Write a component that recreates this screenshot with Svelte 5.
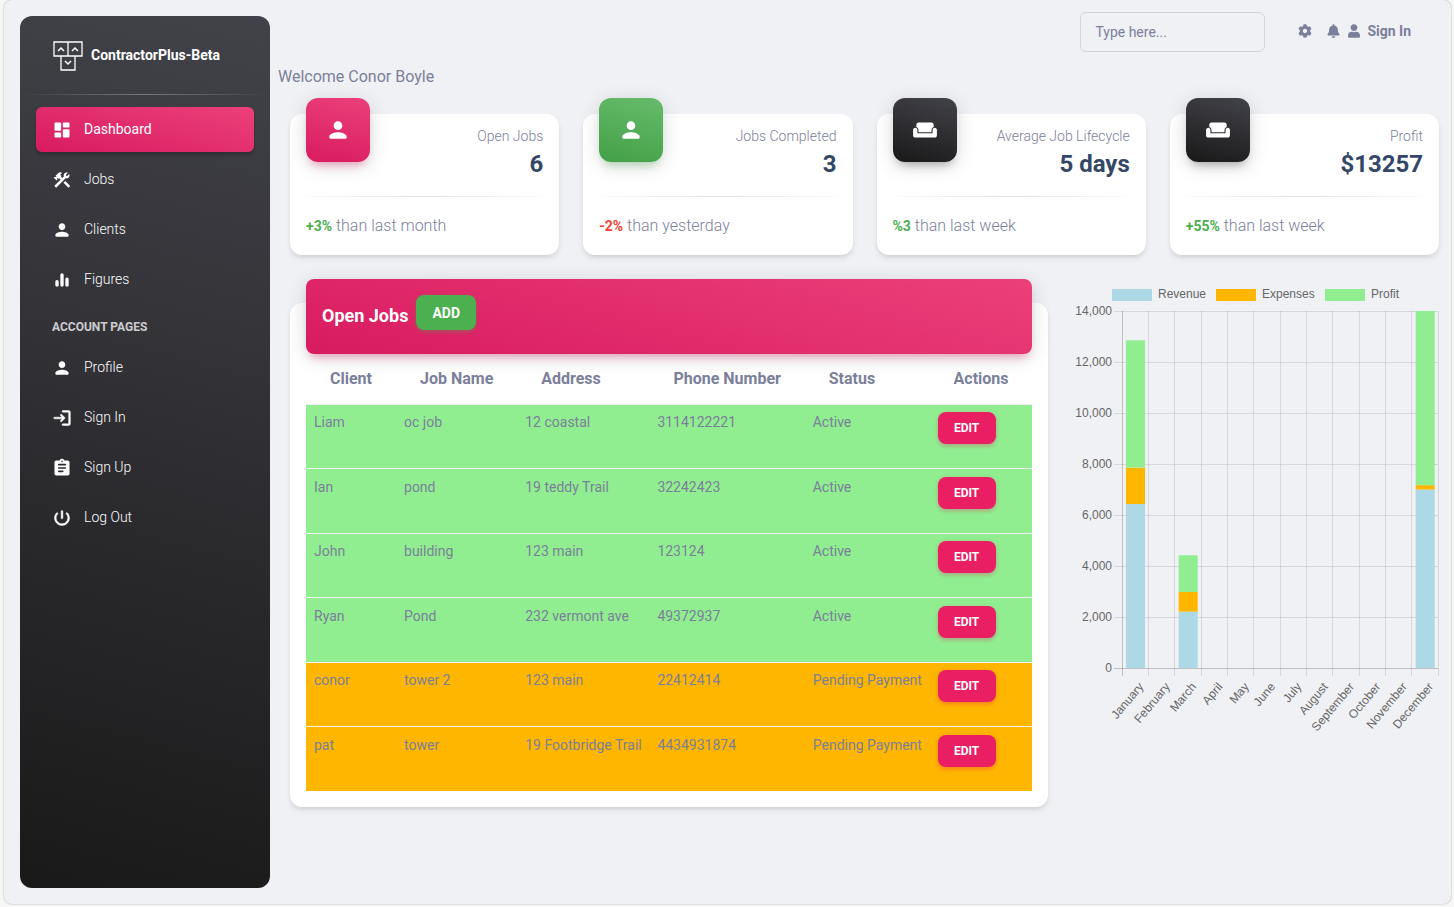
<script>
  const icons = {
    dashboard: 'M4 13h6c.55 0 1-.45 1-1V4c0-.55-.45-1-1-1H4c-.55 0-1 .45-1 1v8c0 .55.45 1 1 1zm0 8h6c.55 0 1-.45 1-1v-4c0-.55-.45-1-1-1H4c-.55 0-1 .45-1 1v4c0 .55.45 1 1 1zm10 0h6c.55 0 1-.45 1-1v-8c0-.55-.45-1-1-1h-6c-.55 0-1 .45-1 1v8c0 .55.45 1 1 1zM13 4v4c0 .55.45 1 1 1h6c.55 0 1-.45 1-1V4c0-.55-.45-1-1-1h-6c-.55 0-1 .45-1 1z',
    tools: 'M13.78 15.17l2.12-2.12 6 6-2.12 2.12zM17.5 10c1.93 0 3.5-1.57 3.5-3.5 0-.58-.16-1.12-.41-1.6l-2.7 2.7-1.49-1.49 2.7-2.7C18.62 3.16 18.08 3 17.5 3 15.57 3 14 4.57 14 6.5c0 .41.08.8.21 1.16l-1.85 1.85-1.78-1.78.71-.71-1.41-1.41L12 3.49c-1.17-1.17-3.07-1.17-4.24 0L4.22 7.03l1.41 1.41H2.81l-.71.71 3.54 3.54.71-.71V9.15l1.41 1.41.71-.71 1.78 1.78-7.41 7.41 2.12 2.12L16.34 9.79c.36.13.75.21 1.16.21z',
    person: 'M12 12c2.21 0 4-1.79 4-4s-1.79-4-4-4-4 1.79-4 4 1.79 4 4 4zm0 2c-2.67 0-8 1.34-8 4v1c0 .55.45 1 1 1h14c.55 0 1-.45 1-1v-1c0-2.66-5.33-4-8-4z',
    figures: 'M12 20c1.1 0 2-.9 2-2V6c0-1.1-.9-2-2-2s-2 .9-2 2v12c0 1.1.9 2 2 2zm-6 0c1.1 0 2-.9 2-2v-4c0-1.1-.9-2-2-2s-2 .9-2 2v4c0 1.1.9 2 2 2zm10-9v7c0 1.1.9 2 2 2s2-.9 2-2v-7c0-1.1-.9-2-2-2s-2 .9-2 2z',
    login: 'M10.3 7.7c-.4.4-.4 1 0 1.4l1.9 1.9H3c-.6 0-1 .4-1 1s.4 1 1 1h9.200l-1.900 1.900c-.4.4-.4 1 0 1.400.4.4 1 .4 1.400 0l3.600-3.600c.4-.4.4-1 0-1.400l-3.600-3.600c-.4-.4-1-.4-1.400 0zM20 19h-7c-.6 0-1 .4-1 1s.4 1 1 1h7c1.100 0 2-.9 2-2V5c0-1.100-.9-2-2-2h-7c-.6 0-1 .4-1 1s.4 1 1 1h7v14z',
    assignment: 'M19 3h-4.180C14.400 1.840 13.300 1 12 1s-2.400.84-2.820 2H5c-1.100 0-2 .9-2 2v14c0 1.100.9 2 2 2h14c1.100 0 2-.9 2-2V5c0-1.100-.9-2-2-2zm-7 0c.55 0 1 .45 1 1s-.45 1-1 1-1-.45-1-1 .45-1 1-1zm1 14H8c-.55 0-1-.45-1-1s.45-1 1-1h5c.55 0 1 .45 1 1s-.45 1-1 1zm3-4H8c-.55 0-1-.45-1-1s.45-1 1-1h8c.55 0 1 .45 1 1s-.45 1-1 1zm0-4H8c-.55 0-1-.45-1-1s.45-1 1-1h8c.55 0 1 .45 1 1s-.45 1-1 1z',
    power: 'M12 3c-.55 0-1 .45-1 1v8c0 .55.45 1 1 1s1-.45 1-1V4c0-.55-.45-1-1-1zm5.140 2.860c-.39.39-.38 1-.01 1.390 1.130 1.200 1.830 2.800 1.870 4.570.09 3.830-3.060 7.130-6.890 7.170C8.180 19.050 5 15.900 5 12c0-1.840.71-3.510 1.870-4.760.37-.39.37-1-.01-1.380-.4-.4-1.050-.39-1.430.02C3.980 7.420 3.070 9.470 3 11.740c-.14 4.880 3.830 9.100 8.710 9.250 5.100.16 9.290-3.930 9.290-9 0-2.370-.92-4.510-2.420-6.110-.38-.41-1.040-.42-1.440-.02z',
    sofa: 'M21 10c-1.100 0-2 .9-2 2v3H5v-3c0-1.100-.9-2-2-2s-2 .9-2 2v5c0 1.100.9 2 2 2h18c1.100 0 2-.9 2-2v-5c0-1.100-.9-2-2-2zm-3-5H6c-1.100 0-2 .9-2 2v2.150c1.160.41 2 1.510 2 2.820V14h12v-2.030c0-1.300.84-2.400 2-2.820V7c0-1.100-.9-2-2-2z'
  };
  const heavy = ['login', 'power'];

  const mainLinks = [
    { label: 'Dashboard', icon: 'dashboard', active: true },
    { label: 'Jobs', icon: 'tools' },
    { label: 'Clients', icon: 'person' },
    { label: 'Figures', icon: 'figures' }
  ];
  const accountLinks = [
    { label: 'Profile', icon: 'person' },
    { label: 'Sign In', icon: 'login' },
    { label: 'Sign Up', icon: 'assignment' },
    { label: 'Log Out', icon: 'power' }
  ];

  const stats = [
    { title: 'Open Jobs', value: '6', delta: '+3%', note: 'than last month', tone: 'pink', icon: 'person' },
    { title: 'Jobs Completed', value: '3', delta: '-2%', note: 'than yesterday', tone: 'green', icon: 'person', down: true },
    { title: 'Average Job Lifecycle', value: '5 days', delta: '%3', note: 'than last week', tone: 'dark', icon: 'sofa' },
    { title: 'Profit', value: '$13257', delta: '+55%', note: 'than last week', tone: 'dark', icon: 'sofa' }
  ];

  const columns = ['Client', 'Job Name', 'Address', 'Phone Number', 'Status', 'Actions'];
  const jobs = [
    ['Liam', 'oc job', '12 coastal', '3114122221', 'Active'],
    ['Ian', 'pond', '19 teddy Trail', '32242423', 'Active'],
    ['John', 'building', '123 main', '123124', 'Active'],
    ['Ryan', 'Pond', '232 vermont ave', '49372937', 'Active'],
    ['conor', 'tower 2', '123 main', '22412414', 'Pending Payment'],
    ['pat', 'tower', '19 Footbridge Trail', '4434931874', 'Pending Payment']
  ];

  const months = ['January', 'February', 'March', 'April', 'May', 'June', 'July', 'August', 'September', 'October', 'November', 'December'];
  const series = [
    { name: 'Revenue', color: '#add8e6', x: 40, data: { 0: 6430, 2: 2210, 11: 7000 } },
    { name: 'Expenses', color: '#ffb600', x: 144, data: { 0: 1430, 2: 770, 11: 170 } },
    { name: 'Profit', color: '#90ee90', x: 253, data: { 0: 4990, 2: 1440, 11: 6830 } }
  ];
  const plot = { left: 50, right: 366, top: 32, bottom: 389, max: 14000 };
  const step = (plot.right - plot.left) / months.length;
  const yOf = (v) => plot.bottom - (v / plot.max) * (plot.bottom - plot.top);
  const xOf = (i) => plot.left + i * step;
  const ticks = [0, 2000, 4000, 6000, 8000, 10000, 12000, 14000];

  const bars = months.flatMap((_, i) => {
    let base = 0;
    return series.flatMap((s) => {
      const v = s.data[i];
      if (!v) return [];
      const bar = { x: xOf(i) + 4, y: yOf(base + v), h: yOf(base) - yOf(base + v), color: s.color };
      base += v;
      return [bar];
    });
  });
</script>

{#snippet icon(name, size)}
  <svg width={size} height={size} viewBox="0 0 24 24" fill="currentColor" stroke="currentColor" stroke-width={heavy.includes(name) ? 0.6 : 0} aria-hidden="true"><path d={icons[name]} /></svg>
{/snippet}

{#snippet navLink(link)}
  <li>
    <a href="#top" class="nav-link" class:active={link.active}>
      {@render icon(link.icon, 20)}
      <span>{link.label}</span>
    </a>
  </li>
{/snippet}

<div class="page" id="top">
  <aside class="sidebar">
    <a href="#top" class="brand">
      <svg width="30" height="32" viewBox="0 -2 30 32" fill="none" stroke="#fff" stroke-width="1.300" aria-hidden="true">
        <path d="M1 1h28v14H1zM15 1v14M8 15v14h14V15" />
        <path d="M5 10l3-3 3 3M19 10l3-3 3 3M12 20l3 3 3-3" stroke-width="1.500" />
      </svg>
      <span>ContractorPlus-Beta</span>
    </a>
    <hr class="rule light" />
    <nav>
      <ul>
        {#each mainLinks as link}{@render navLink(link)}{/each}
        <li><h6>Account pages</h6></li>
        {#each accountLinks as link}{@render navLink(link)}{/each}
      </ul>
    </nav>
  </aside>

  <main>
    <header class="topbar">
      <input type="text" placeholder="Type here..." aria-label="Search" />
      <div class="actions">
        <button class="plain" aria-label="Settings">
          <svg width="14" height="14" viewBox="0 0 512 512" fill="currentColor"><path d="M487.400 315.700l-42.600-24.600c4.300-23.200 4.300-47 0-70.200l42.600-24.600c4.900-2.800 7.100-8.600 5.500-14-11.100-35.600-30-67.800-54.700-94.600-3.800-4.100-10-5.100-14.800-2.300L380.800 110c-17.900-15.400-38.500-27.300-60.800-35.100V25.800c0-5.600-3.900-10.500-9.400-11.700-36.700-8.200-74.300-7.800-109.200 0-5.500 1.200-9.400 6.100-9.400 11.700V75c-22.200 7.900-42.800 19.800-60.800 35.100L88.700 85.500c-4.900-2.800-11-1.900-14.800 2.300-24.700 26.700-43.600 58.900-54.700 94.600-1.700 5.400.6 11.200 5.500 14L67.300 221c-4.300 23.200-4.300 47 0 70.200l-42.600 24.600c-4.900 2.800-7.100 8.600-5.500 14 11.100 35.600 30 67.800 54.700 94.600 3.800 4.100 10 5.100 14.800 2.300l42.600-24.600c17.900 15.400 38.500 27.300 60.800 35.100v49.200c0 5.600 3.900 10.500 9.400 11.700 36.700 8.200 74.300 7.800 109.200 0 5.500-1.200 9.400-6.100 9.400-11.700v-49.200c22.200-7.900 42.800-19.800 60.800-35.100l42.600 24.600c4.900 2.800 11 1.900 14.800-2.300 24.700-26.700 43.600-58.900 54.700-94.600 1.500-5.500-.7-11.300-5.600-14.100zM256 336c-44.100 0-80-35.900-80-80s35.900-80 80-80 80 35.900 80 80-35.900 80-80 80z" /></svg>
        </button>
        <button class="plain bell" aria-label="Notifications">
          <svg width="13" height="14" viewBox="0 0 448 512" fill="currentColor"><path d="M224 512c35.320 0 63.970-28.650 63.970-64H160.030c0 35.350 28.650 64 63.970 64zm215.390-149.710c-19.320-20.760-55.470-51.990-55.470-154.290 0-77.700-54.480-139.900-127.940-155.160V32c0-17.670-14.320-32-31.980-32s-31.980 14.330-31.980 32v20.840C118.560 68.100 64.080 130.300 64.080 208c0 102.300-36.150 133.530-55.470 154.290-6 6.450-8.660 14.160-8.610 21.710.11 16.400 12.980 32 32.100 32h383.800c19.120 0 32-15.600 32.100-32 .05-7.550-2.610-15.270-8.610-21.710z" /></svg>
        </button>
        <a href="#top" class="signin">
          <svg width="12" height="14" viewBox="0 0 448 512" fill="currentColor" aria-hidden="true"><path d="M224 256c70.700 0 128-57.300 128-128S294.700 0 224 0 96 57.300 96 128s57.300 128 128 128zm89.600 32h-16.700c-22.200 10.200-46.900 16-72.900 16s-50.600-5.800-72.900-16h-16.700C60.200 288 0 348.200 0 422.400V464c0 26.500 21.500 48 48 48h352c26.500 0 48-21.500 48-48v-41.600c0-74.200-60.200-134.400-134.400-134.400z" /></svg>
          <span>Sign In</span>
        </a>
      </div>
    </header>

    <p class="welcome">Welcome Conor Boyle</p>

    <section class="stats">
      {#each stats as s}
        <article class="card">
          <div class="stat-head">
            <div class="tile {s.tone}">{@render icon(s.icon, 26)}</div>
            <div class="figures">
              <p>{s.title}</p>
              <h4>{s.value}</h4>
            </div>
          </div>
          <hr class="rule" />
          <p class="note"><strong class:down={s.down}>{s.delta}</strong> {s.note}</p>
        </article>
      {/each}
    </section>

    <section class="lower">
      <div class="jobs-column">
        <article class="card jobs">
          <div class="jobs-head">
            <h6>Open Jobs</h6>
            <button class="btn add">Add</button>
          </div>
          <table>
            <colgroup>
              <col class="c1" /><col class="c2" /><col class="c3" /><col class="c4" /><col class="c5" /><col class="c6" />
            </colgroup>
            <thead>
              <tr>{#each columns as c}<th scope="col">{c}</th>{/each}</tr>
            </thead>
            <tbody>
              {#each jobs as job}
                <tr class:pending={job[4] !== 'Active'}>
                  {#each job as cell}<td>{cell}</td>{/each}
                  <td><button class="btn edit">Edit</button></td>
                </tr>
              {/each}
            </tbody>
          </table>
        </article>
      </div>

      <div class="chart">
        <svg viewBox="0 0 367 462" role="img" aria-label="Revenue, expenses and profit by month">
          {#each series as s}
            <rect x={s.x} y="10" width="40" height="12" fill={s.color} />
            <text x={s.x + 46} y="19">{s.name}</text>
          {/each}
          <g class="grid">
            {#each ticks as t}
              <line x1={plot.left - 8} x2={plot.right} y1={yOf(t)} y2={yOf(t)} class:axis={t === 0} />
            {/each}
            {#each [...months, ''] as _, i}
              <line x1={xOf(i)} x2={xOf(i)} y1={plot.top} y2={plot.bottom + 8} class:axis={i === 0} />
            {/each}
          </g>
          {#each bars as b}
            <rect x={b.x} y={b.y} width="19" height={b.h} fill={b.color} />
          {/each}
          {#each ticks as t}
            <text x="40" y={yOf(t) + 4} text-anchor="end">{t.toLocaleString('en-US')}</text>
          {/each}
          {#each months as m, i}
            <text transform="translate({xOf(i) + step / 2 + 9} {plot.bottom + 19}) rotate(-50)" text-anchor="end">{m}</text>
          {/each}
        </svg>
      </div>
    </section>
  </main>
</div>

<style>
  :global(body) {
    margin: 0;
    background: #f7f7f7;
  }
  .page, .page :global(*) {
    box-sizing: border-box;
  }
  .page {
    display: flex;
    min-height: calc(100vh - 3px);
    margin: 0 3px 3px 4px;
    background: #f0f1f5;
    border-radius: 8px;
    box-shadow: 0 0 2px rgba(0, 0, 0, 0.35);
    font-family: Roboto, "Liberation Sans", sans-serif;
    font-size: 16px;
    line-height: 24px;
    color: #7b809a;
  }
  h4, h6, p, ul {
    margin: 0;
    padding: 0;
  }
  ul {
    list-style: none;
  }
  a {
    color: inherit;
    text-decoration: none;
  }
  button, input {
    font-family: inherit;
  }

  .sidebar {
    flex: 0 0 250px;
    margin: 16px 0 16px 16px;
    border-radius: 12px;
    background: linear-gradient(195deg, #42424a, #191919);
    color: #fff;
  }
  .brand {
    display: flex;
    align-items: center;
    gap: 8px;
    height: 78px;
    padding-left: 33px;
    font-size: 14px;
    font-weight: 700;
  }
  .rule {
    height: 1px;
    margin: 0;
    border: 0;
    background: linear-gradient(90deg, transparent, rgba(0, 0, 0, 0.12), transparent);
  }
  .rule.light {
    background: linear-gradient(90deg, transparent, rgba(255, 255, 255, 0.3), transparent);
  }
  .sidebar ul {
    display: flex;
    flex-direction: column;
    gap: 5px;
    padding: 12px 16px;
  }
  .nav-link {
    display: flex;
    align-items: center;
    gap: 12px;
    height: 45px;
    padding: 0 16px;
    border-radius: 6px;
    font-size: 14px;
    font-weight: 300;
  }
  .nav-link span {
    padding-bottom: 2px;
  }
  .nav-link.active {
    font-weight: 400;
    background: linear-gradient(195deg, #ec407a, #d81b60);
    box-shadow: 0 3px 3px rgba(0, 0, 0, 0.2);
  }
  .sidebar h6 {
    padding: 9px 16px 2px;
    font-size: 12px;
    line-height: 22px;
    text-transform: uppercase;
    opacity: 0.75;
  }

  main {
    flex: 1;
    min-width: 0;
    padding: 12px 0 24px 8px;
  }
  .topbar {
    display: flex;
    justify-content: flex-end;
    gap: 33px;
    padding-right: 40px;
  }
  .topbar input {
    width: 185px;
    height: 40px;
    padding: 0 14px;
    border: 1px solid #d2d6da;
    border-radius: 6px;
    background: transparent;
    font-size: 14px;
    color: #495057;
  }
  .topbar input::placeholder {
    color: #7b809a;
    opacity: 1;
  }
  .actions {
    display: flex;
    align-items: center;
    gap: 8px;
    height: 38px;
  }
  .signin {
    display: flex;
    align-items: center;
    gap: 7px;
    font-size: 14px;
    font-weight: 700;
  }
  .plain {
    display: flex;
    padding: 0;
    border: 0;
    background: none;
    color: inherit;
  }
  .bell {
    margin-left: 7px;
  }
  .welcome {
    margin-top: 13px;
  }

  .card {
    border-radius: 12px;
    background: #fff;
    box-shadow: 0 4px 6px -1px rgba(0, 0, 0, 0.1), 0 2px 4px -1px rgba(0, 0, 0, 0.06);
  }
  .stats {
    display: grid;
    grid-template-columns: repeat(4, 1fr);
    gap: 24px;
    padding: 25px 12px 0;
  }
  .stat-head {
    display: flex;
    justify-content: space-between;
    height: 82px;
    padding: 0 16px;
  }
  .tile {
    display: grid;
    place-items: center;
    width: 64px;
    height: 64px;
    margin-top: -16px;
    border-radius: 12px;
    color: #fff;
  }
  .pink {
    background: linear-gradient(195deg, #ec407a, #d81b60);
    box-shadow: 0 4px 20px rgba(0, 0, 0, 0.14), 0 7px 10px -5px rgba(233, 30, 99, 0.4);
  }
  .green {
    background: linear-gradient(195deg, #66bb6a, #43a047);
    box-shadow: 0 4px 20px rgba(0, 0, 0, 0.14), 0 7px 10px -5px rgba(76, 175, 80, 0.4);
  }
  .dark {
    background: linear-gradient(195deg, #42424a, #191919);
    box-shadow: 0 4px 20px rgba(0, 0, 0, 0.14), 0 7px 10px -5px rgba(64, 64, 64, 0.4);
  }
  .figures {
    padding-top: 10px;
    text-align: right;
  }
  .figures p {
    font-size: 14px;
    font-weight: 300;
  }
  .figures h4 {
    font-size: 24px;
    line-height: 32px;
    font-weight: 700;
    color: #344767;
  }
  .note {
    padding: 17px 16px;
    font-weight: 300;
  }
  .note strong {
    font-size: 14px;
    font-weight: 700;
    color: #4caf50;
  }
  .note .down {
    color: #f44335;
  }

  .lower {
    display: grid;
    grid-template-columns: 2fr 1fr;
    align-items: start;
    padding-top: 24px;
  }
  .jobs-column, .chart {
    padding: 0 12px;
  }
  .jobs {
    display: flow-root;
    margin-top: 24px;
    padding: 0 16px 16px;
  }
  .jobs-head {
    display: flex;
    align-items: flex-start;
    gap: 8px;
    height: 75px;
    margin-top: -24px;
    padding: 16px;
    border-radius: 8px;
    background: linear-gradient(195deg, #ec407a, #d81b60);
    box-shadow: 0 4px 20px rgba(0, 0, 0, 0.14), 0 7px 10px -5px rgba(233, 30, 99, 0.4);
  }
  .jobs-head h6 {
    font-size: 18px;
    line-height: 42px;
    font-weight: 700;
    color: #fff;
  }
  .btn {
    border: 0;
    border-radius: 8px;
    padding: 0 16px;
    font-weight: 700;
    text-transform: uppercase;
    color: #fff;
  }
  .add {
    height: 35px;
    font-size: 14px;
    background: #4caf50;
    box-shadow: 0 3px 3px rgba(76, 175, 80, 0.15), 0 1px 5px rgba(76, 175, 80, 0.2);
  }
  .edit {
    display: block;
    min-width: 58px;
    height: 32px;
    font-size: 12px;
    background: #e91e63;
    box-shadow: 0 3px 3px rgba(233, 30, 99, 0.15), 0 1px 5px rgba(233, 30, 99, 0.2);
  }
  table {
    width: 100%;
    table-layout: fixed;
    border-collapse: separate;
    border-spacing: 0;
  }
  .c1 { width: 12.4%; }
  .c2 { width: 16.7%; }
  .c3 { width: 18.2%; }
  .c4 { width: 21.4%; }
  .c5 { width: 17.2%; }
  .c6 { width: 14.1%; }
  th {
    height: 51px;
    padding: 0 0 0 24px;
    text-align: left;
    font-weight: 700;
    white-space: nowrap;
    border-bottom: 1px solid #f0f2f5;
  }
  td {
    height: 64px;
    padding: 7px 0 0 8px;
    vertical-align: top;
    font-size: 14px;
    line-height: 21px;
    white-space: nowrap;
    background: #90ee90;
    border-bottom: 1px solid #f0f2f5;
  }
  tr:nth-child(even) td {
    height: 65px;
    padding-top: 8px;
  }
  .pending td {
    background: #ffb600;
  }
  tbody tr:last-child td {
    height: 64px;
    border-bottom: 0;
  }

  .chart svg {
    display: block;
    width: 100%;
  }
  .chart text {
    font-family: "Liberation Sans", Arial, sans-serif;
    font-size: 12px;
    fill: #666;
  }
  .grid line {
    stroke: rgba(0, 0, 0, 0.1);
    shape-rendering: crispEdges;
  }
  .grid .axis {
    stroke: rgba(0, 0, 0, 0.2);
  }
</style>
